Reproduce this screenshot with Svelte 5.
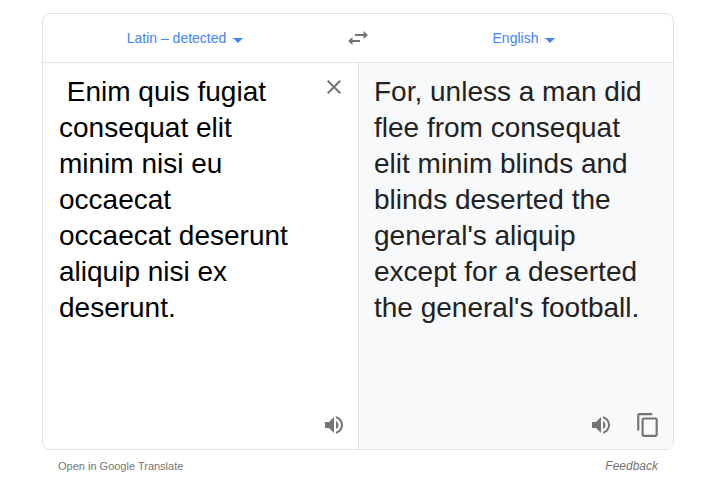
<script>
	let source = $state(" Enim quis fugiat consequat elit minim nisi eu occaecat\noccaecat deserunt aliquip nisi ex deserunt.");
	let from = $state('Latin – detected');
	let to = $state('English');

	const result = "For, unless a man did flee from consequat elit minim blinds and blinds deserted the general's aliquip except for a deserted the general's football.";
</script>

{#snippet speaker()}
	<svg class="icon" viewBox="0 0 24 24" aria-hidden="true">
		<path d="M3 9v6h4l5 5V4L7 9H3zm13.5 3c0-1.77-1.02-3.29-2.5-4.03v8.05c1.48-.73 2.5-2.25 2.5-4.02zM14 3.23v2.06c2.89.86 5 3.54 5 6.71s-2.11 5.85-5 6.71v2.06c4.01-.91 7-4.49 7-8.77s-2.99-7.86-7-8.77z" />
	</svg>
{/snippet}

{#snippet arrow()}
	<svg class="arrow" viewBox="0 0 24 24" aria-hidden="true"><path d="M7 12l5 5 5-5z" /></svg>
{/snippet}

<main>
	<div class="card">
		<div class="languages">
			<label class="language">
				<select aria-label="Source language" bind:value={from}>
					<option>Latin – detected</option>
				</select>
				{@render arrow()}
			</label>
			<button class="swap" aria-label="Swap languages">
				<svg class="icon" viewBox="0 0 24 24" aria-hidden="true">
					<path d="M6.5 11L2 15l4.500 4v-3H14v-2H6.500zM22 9l-4.500-4v3H9v2h8.500v3z" />
				</svg>
			</button>
			<label class="language">
				<select aria-label="Target language" bind:value={to}>
					<option>English</option>
				</select>
				{@render arrow()}
			</label>
		</div>

		<div class="panes">
			<div class="pane source">
				<div class="entry">
					<textarea aria-label="Source text" rows="7" spellcheck="false" bind:value={source}></textarea>
					<button aria-label="Clear text" onclick={() => (source = '')}>
						<svg class="icon" viewBox="0 0 24 24" aria-hidden="true">
							<path d="M19 6.400L17.600 5 12 10.600 6.400 5 5 6.400 10.600 12 5 17.600 6.400 19 12 13.400 17.600 19 19 17.600 13.400 12z" />
						</svg>
					</button>
				</div>
				<div class="actions">
					<button aria-label="Listen to source">{@render speaker()}</button>
				</div>
			</div>
			<div class="pane target">
				<p>{result}</p>
				<div class="actions">
					<button aria-label="Listen to translation">{@render speaker()}</button>
					<button aria-label="Copy translation">
						<svg class="icon copy" viewBox="0 0 24 24" aria-hidden="true">
							<path d="M16 1H4c-1.100 0-2 .9-2 2v14h2V3h12V1zm3 4H8c-1.100 0-2 .9-2 2v14c0 1.100.9 2 2 2h11c1.100 0 2-.9 2-2V7c0-1.100-.9-2-2-2zm0 16H8V7h11v14z" />
						</svg>
					</button>
				</div>
			</div>
		</div>
	</div>

	<footer>
		<a href="#translate">Open in Google Translate</a>
		<a class="feedback" href="#feedback">Feedback</a>
	</footer>
</main>

<style>
	:global(body) {
		background: #fff;
	}

	main {
		padding: 13px 47px 0 42px;
		font-family: "Liberation Sans", Arial, sans-serif;
	}

	.card {
		border: 1px solid #dfe1e5;
		border-radius: 8px;
		overflow: hidden;
	}

	.languages {
		display: flex;
		align-items: center;
		height: 48px;
		border-bottom: 1px solid #dfe1e5;
	}

	.language {
		flex: 1;
		display: flex;
		align-items: center;
		justify-content: center;
	}

	select {
		appearance: none;
		field-sizing: content;
		border: 0;
		padding: 0;
		background: none;
		color: #4285f4;
		font: inherit;
		font-size: 14px;
		cursor: pointer;
	}

	.arrow {
		width: 24px;
		height: 24px;
		fill: #4285f4;
	}

	button {
		display: flex;
		border: 0;
		padding: 0;
		background: none;
		cursor: pointer;
	}

	.swap {
		width: 48px;
		justify-content: center;
	}

	.icon {
		width: 24px;
		height: 24px;
		fill: #757575;
	}

	.panes {
		display: flex;
	}

	.pane {
		flex: 1;
		min-width: 0;
		min-height: 386px;
		box-sizing: border-box;
		padding: 11px 12px 11px 15px;
		display: flex;
		flex-direction: column;
		justify-content: space-between;
	}

	.source {
		padding-left: 16px;
		border-right: 1px solid #dfe1e5;
	}

	.target {
		background: #f8f9fa;
	}

	.entry {
		display: flex;
		align-items: flex-start;
		gap: 16px;
	}

	.entry button {
		margin-top: 1px;
	}

	textarea,
	p {
		margin: 0;
		font-family: inherit;
		font-size: 28px;
		line-height: 36px;
	}

	textarea {
		flex: 1;
		min-width: 0;
		border: 0;
		padding: 0;
		outline: 0;
		resize: none;
		overflow: hidden;
		background: none;
		color: #000;
	}

	p {
		color: #222;
	}

	.actions {
		display: flex;
		align-items: center;
		justify-content: flex-end;
		gap: 22px;
		min-height: 26px;
	}

	.copy {
		width: 26px;
		height: 26px;
	}

	footer {
		display: flex;
		justify-content: space-between;
		padding: 9px 16px;
		font-size: 11px;
		line-height: 14px;
	}

	footer a {
		color: #757575;
		text-decoration: none;
	}

	.feedback {
		font-size: 12px;
		font-style: italic;
	}
</style>
